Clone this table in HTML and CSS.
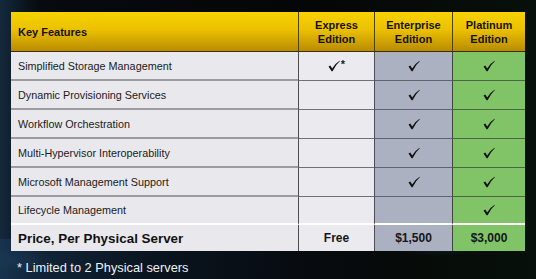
FILE: index.html
```html
<!DOCTYPE html>
<html>
<head>
<meta charset="utf-8">
<link rel="stylesheet" href="styles.css">
</head>
<body>
<div class="slide">
  <div class="grid">
    <div class="h h-first">Key Features</div>
    <div class="h">Express<br>Edition</div>
    <div class="h">Enterprise<br>Edition</div>
    <div class="h h-last">Platinum<br>Edition</div>

    <div class="c f">Simplified Storage Management</div>
    <div class="c x"><svg class="ck" viewBox="0 0 12 12"><path d="M0.5 6.6 L2.3 5.6 L4.2 8.6 Q7 3.5 11.6 0.8 L11.8 1.3 Q7.6 4.8 4.6 11.2 L3.6 11.2 Z"/></svg><span class="star">*</span></div>
    <div class="c e"><svg class="ck" viewBox="0 0 12 12"><path d="M0.5 6.6 L2.3 5.6 L4.2 8.6 Q7 3.5 11.6 0.8 L11.8 1.3 Q7.6 4.8 4.6 11.2 L3.6 11.2 Z"/></svg></div>
    <div class="c p"><svg class="ck" viewBox="0 0 12 12"><path d="M0.5 6.6 L2.3 5.6 L4.2 8.6 Q7 3.5 11.6 0.8 L11.8 1.3 Q7.6 4.8 4.6 11.2 L3.6 11.2 Z"/></svg></div>

    <div class="c f">Dynamic Provisioning Services</div>
    <div class="c x"></div>
    <div class="c e"><svg class="ck" viewBox="0 0 12 12"><path d="M0.5 6.6 L2.3 5.6 L4.2 8.6 Q7 3.5 11.6 0.8 L11.8 1.3 Q7.6 4.8 4.6 11.2 L3.6 11.2 Z"/></svg></div>
    <div class="c p"><svg class="ck" viewBox="0 0 12 12"><path d="M0.5 6.6 L2.3 5.6 L4.2 8.6 Q7 3.5 11.6 0.8 L11.8 1.3 Q7.6 4.8 4.6 11.2 L3.6 11.2 Z"/></svg></div>

    <div class="c f">Workflow Orchestration</div>
    <div class="c x"></div>
    <div class="c e"><svg class="ck" viewBox="0 0 12 12"><path d="M0.5 6.6 L2.3 5.6 L4.2 8.6 Q7 3.5 11.6 0.8 L11.8 1.3 Q7.6 4.8 4.6 11.2 L3.6 11.2 Z"/></svg></div>
    <div class="c p"><svg class="ck" viewBox="0 0 12 12"><path d="M0.5 6.6 L2.3 5.6 L4.2 8.6 Q7 3.5 11.6 0.8 L11.8 1.3 Q7.6 4.8 4.6 11.2 L3.6 11.2 Z"/></svg></div>

    <div class="c f">Multi-Hypervisor Interoperability</div>
    <div class="c x"></div>
    <div class="c e"><svg class="ck" viewBox="0 0 12 12"><path d="M0.5 6.6 L2.3 5.6 L4.2 8.6 Q7 3.5 11.6 0.8 L11.8 1.3 Q7.6 4.8 4.6 11.2 L3.6 11.2 Z"/></svg></div>
    <div class="c p"><svg class="ck" viewBox="0 0 12 12"><path d="M0.5 6.6 L2.3 5.6 L4.2 8.6 Q7 3.5 11.6 0.8 L11.8 1.3 Q7.6 4.8 4.6 11.2 L3.6 11.2 Z"/></svg></div>

    <div class="c f">Microsoft Management Support</div>
    <div class="c x"></div>
    <div class="c e"><svg class="ck" viewBox="0 0 12 12"><path d="M0.5 6.6 L2.3 5.6 L4.2 8.6 Q7 3.5 11.6 0.8 L11.8 1.3 Q7.6 4.8 4.6 11.2 L3.6 11.2 Z"/></svg></div>
    <div class="c p"><svg class="ck" viewBox="0 0 12 12"><path d="M0.5 6.6 L2.3 5.6 L4.2 8.6 Q7 3.5 11.6 0.8 L11.8 1.3 Q7.6 4.8 4.6 11.2 L3.6 11.2 Z"/></svg></div>

    <div class="c f last">Lifecycle Management</div>
    <div class="c x last"></div>
    <div class="c e last"></div>
    <div class="c p last"><svg class="ck" viewBox="0 0 12 12"><path d="M0.5 6.6 L2.3 5.6 L4.2 8.6 Q7 3.5 11.6 0.8 L11.8 1.3 Q7.6 4.8 4.6 11.2 L3.6 11.2 Z"/></svg></div>

    <div class="r f price">Price, Per Physical Server</div>
    <div class="r x">Free</div>
    <div class="r e">$1,500</div>
    <div class="r p">$3,000</div>
  </div>
  <div class="note">* Limited to 2 Physical servers</div>
</div>
</body>
</html>
```

FILE: styles.css
```css
html, body {
  margin: 0;
  padding: 0;
  width: 536px;
  height: 279px;
  overflow: hidden;
  background: #050708;
}

.slide {
  width: 536px;
  height: 279px;
  box-sizing: border-box;
  padding: 12px 11px 0 11px;
  font-family: "Liberation Sans", Arial, sans-serif;
  background:
    radial-gradient(ellipse 60px 14px at 440px 242px, rgba(40,60,80,0.55), transparent),
    radial-gradient(ellipse 40px 12px at 14px 260px, rgba(40,70,100,0.5), transparent),
    linear-gradient(90deg, #15293c 0px, #10202f 11px, #070a0e 40px, #050607 300px, #07100a 536px);
  background-color: #050708;
  position: relative;
}

.slide::after {
  content: "";
  position: absolute;
  left: 0;
  right: 0;
  bottom: 0;
  height: 40px;
  background: linear-gradient(90deg, rgba(25,55,85,0.7) 0, rgba(15,35,55,0.45) 150px, rgba(5,10,15,0) 400px);
  pointer-events: none;
}

.grid {
  display: grid;
  grid-template-columns: 287px 76px 78px 73px;
  grid-template-rows: 40px repeat(5, 29px) 28px 26px;
  position: relative;
  z-index: 1;
}

.h {
  background: linear-gradient(180deg, #f7d300 0%, #ebc100 45%, #b98b02 100%);
  border-left: 1px solid #4f4000;
  border-bottom: 1px solid #3a2e00;
  font-weight: bold;
  font-size: 11px;
  line-height: 14px;
  color: #161200;
  text-align: center;
  display: flex;
  align-items: center;
  justify-content: center;
}

.h-first {
  border-left: none;
  justify-content: flex-start;
  padding-left: 7px;
  padding-top: 1px;
  text-align: left;
}

.c {
  display: flex;
  align-items: center;
  justify-content: center;
  font-size: 10.8px;
  color: #1a1a1a;
  border-bottom: 1px solid #6f7078;
  box-sizing: border-box;
}

.c.f {
  justify-content: flex-start;
  padding-left: 7px;
  background: #e9e9ed;
  border-bottom: 2px solid #9b9ca3;
}

.c.x {
  background: #ebebef;
  border-left: 1px solid #4d4d52;
}

.c.e {
  background: #abb1c1;
  border-left: 1px solid #4d4d55;
  border-bottom-color: #5f636e;
}

.c.p {
  background: #80c467;
  border-left: 1px solid #3f4a3a;
  border-bottom-color: #4d6545;
}

.c.last {
  border-bottom: 2px solid #ffffff;
}

.ck {
  width: 12px;
  height: 12px;
  fill: #111;
  margin-top: -1px;
}

.star {
  font-size: 11px;
  font-weight: bold;
  margin-left: 1px;
  margin-top: -5px;
}

.r {
  display: flex;
  align-items: center;
  justify-content: center;
  font-weight: bold;
  font-size: 12px;
  color: #161616;
}

.r.f {
  justify-content: flex-start;
  padding-left: 7px;
  background: #e9e9ed;
  font-size: 13.4px;
  color: #111;
}

.r.x {
  background: #ebebef;
  border-left: 1px solid #4d4d52;
}

.r.e {
  background: #abb1c1;
  border-left: 1px solid #4d4d55;
}

.r.p {
  background: #80c467;
  border-left: 1px solid #3f4a3a;
}

.note {
  position: relative;
  z-index: 1;
  color: #eef2f6;
  font-size: 12.8px;
  padding: 9px 0 0 6px;
}
```
